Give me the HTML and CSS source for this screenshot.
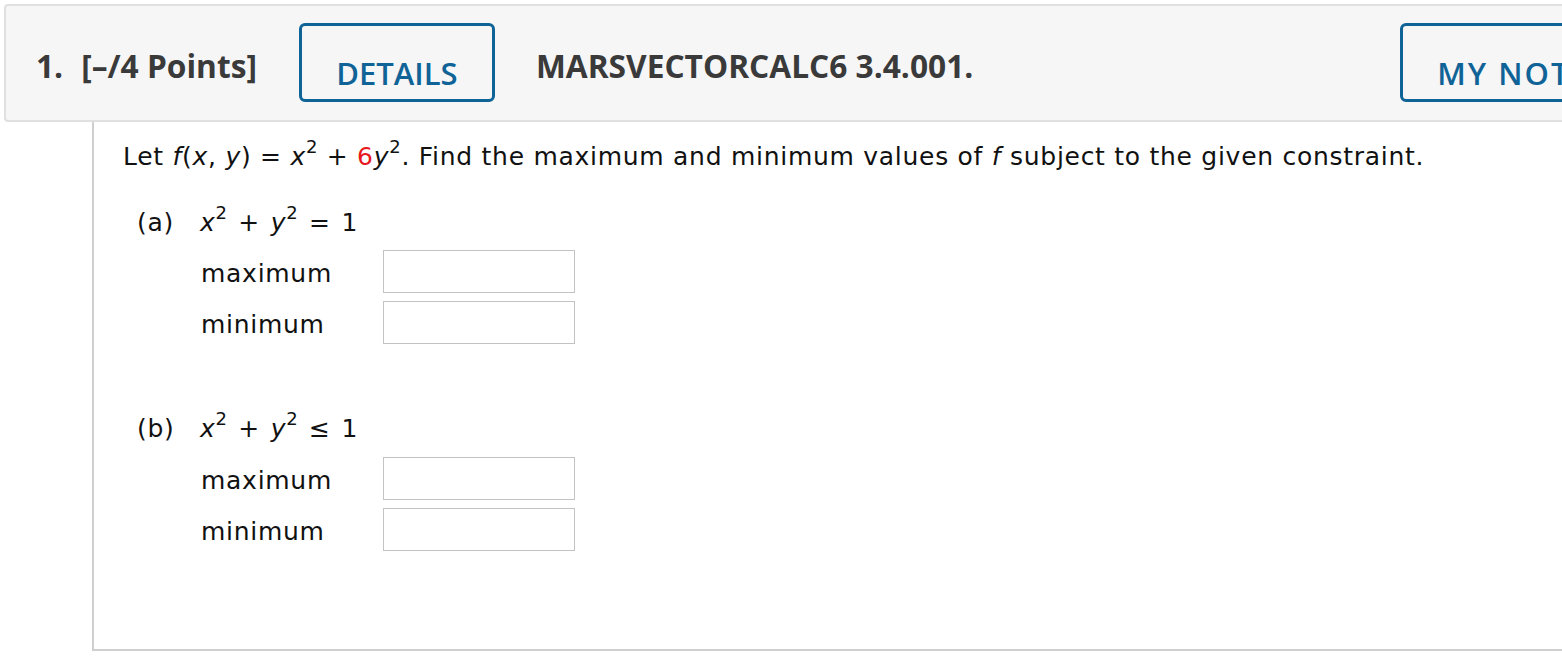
FILE: index.html
```html
<!DOCTYPE html>
<html>
<head>
<meta charset="utf-8">
<link rel="stylesheet" href="styles.css">
</head>
<body>
<div class="question">
  <div class="qhead">
    <span class="qnum">1.</span>
    <span class="qpoints">[–/4 Points]</span>
    <button class="btn btn-details">DETAILS</button>
    <span class="qcode">MARSVECTORCALC6 3.4.001.</span>
    <span class="spacer"></span>
    <button class="btn btn-notes">MY NOTES</button>
  </div>
  <div class="qbody">
    <p class="stem">Let <i>f</i>(<i>x</i>, <i>y</i>) = <i>x</i><sup>2</sup> + <span class="red">6</span><i>y</i><sup>2</sup>. Find the maximum and minimum values of <i>f</i> subject to the given constraint.</p>

    <div class="part part-a">
      <div class="part-line"><span class="plabel">(a)</span><span class="pexpr"><i>x</i><sup>2</sup> + <i>y</i><sup>2</sup> = 1</span></div>
      <div class="ans-row"><span class="ans-label">maximum</span><input class="ans" type="text"></div>
      <div class="ans-row"><span class="ans-label">minimum</span><input class="ans" type="text"></div>
    </div>

    <div class="part part-b">
      <div class="part-line"><span class="plabel">(b)</span><span class="pexpr"><i>x</i><sup>2</sup> + <i>y</i><sup>2</sup> ≤ 1</span></div>
      <div class="ans-row"><span class="ans-label">maximum</span><input class="ans" type="text"></div>
      <div class="ans-row"><span class="ans-label">minimum</span><input class="ans" type="text"></div>
    </div>
  </div>
</div>
</body>
</html>
```
FILE: styles.css
```css
html, body {
  margin: 0;
  padding: 0;
  background: #ffffff;
  overflow: hidden;
}
body {
  padding: 4px 0 0 4px;
}
.question {
  width: 1700px;
}
.qhead {
  display: flex;
  align-items: center;
  height: 114px;
  box-sizing: content-box;
  border: 2px solid #e0e0e0;
  border-radius: 4px;
  background: #f6f6f6;
  font-family: "Open Sans", "Liberation Sans", sans-serif;
  font-weight: 700;
  font-size: 31.7px;
  color: #3a3a3a;
  padding-left: 30px;
}
.qnum {
  margin-right: 18px;
  position: relative;
  top: 2px;
}
.qpoints {
  margin-right: 42px;
  position: relative;
  top: 2px;
}
.qcode {
  margin-left: 41px;
  position: relative;
  top: 2px;
}
.spacer {
  width: 427px;
}
.btn {
  box-sizing: border-box;
  height: 79px;
  border: 3px solid #0f6397;
  border-radius: 6px;
  background: #f6f6f6;
  color: #0f6397;
  font-family: "Open Sans", "Liberation Sans", sans-serif;
  font-weight: 600;
  font-size: 31px;
  padding: 21px 0 0 0;
  text-align: center;
  margin-top: -1px;
}
.btn-details {
  width: 196px;
}
.btn-notes {
  width: 250px;
  text-align: left;
  padding-left: 34px;
  letter-spacing: 2px;
}
.qbody {
  margin-left: 88px;
  border-left: 2px solid #cfcfcf;
  border-bottom: 2px solid #cfcfcf;
  height: 527px;
  padding-left: 29px;
  font-family: "DejaVu Sans", Verdana, sans-serif;
  font-size: 25px;
  letter-spacing: 0.72px;
  color: #111;
}
.stem {
  margin: 0;
  padding-top: 20px;
  line-height: 30px;
  white-space: nowrap;
}
i {
  font-style: italic;
}
sup {
  font-size: 18px;
  line-height: 0;
  vertical-align: 12px;
}
.red {
  color: #e8171d;
}
.part-line {
  display: flex;
  line-height: 30px;
  padding-left: 14px;
}
.plabel {
  width: 63px;
}
.pexpr {
  word-spacing: 2px;
}
.part-a {
  margin-top: 36px;
}
.part-b {
  margin-top: 68px;
}
.part-a .part-line {
  margin-bottom: 12px;
}
.part-b .part-line {
  margin-bottom: 13px;
}
.ans-row {
  display: flex;
  align-items: flex-start;
  padding-left: 78px;
  margin-bottom: 6px;
}
.ans-label {
  width: 182px;
  line-height: 43px;
  padding-top: 2px;
}
.ans {
  box-sizing: border-box;
  width: 192px;
  height: 43px;
  border: 1px solid #c3c3c3;
  border-radius: 0;
  background: #fff;
  margin: 0;
  padding: 0;
}
```
